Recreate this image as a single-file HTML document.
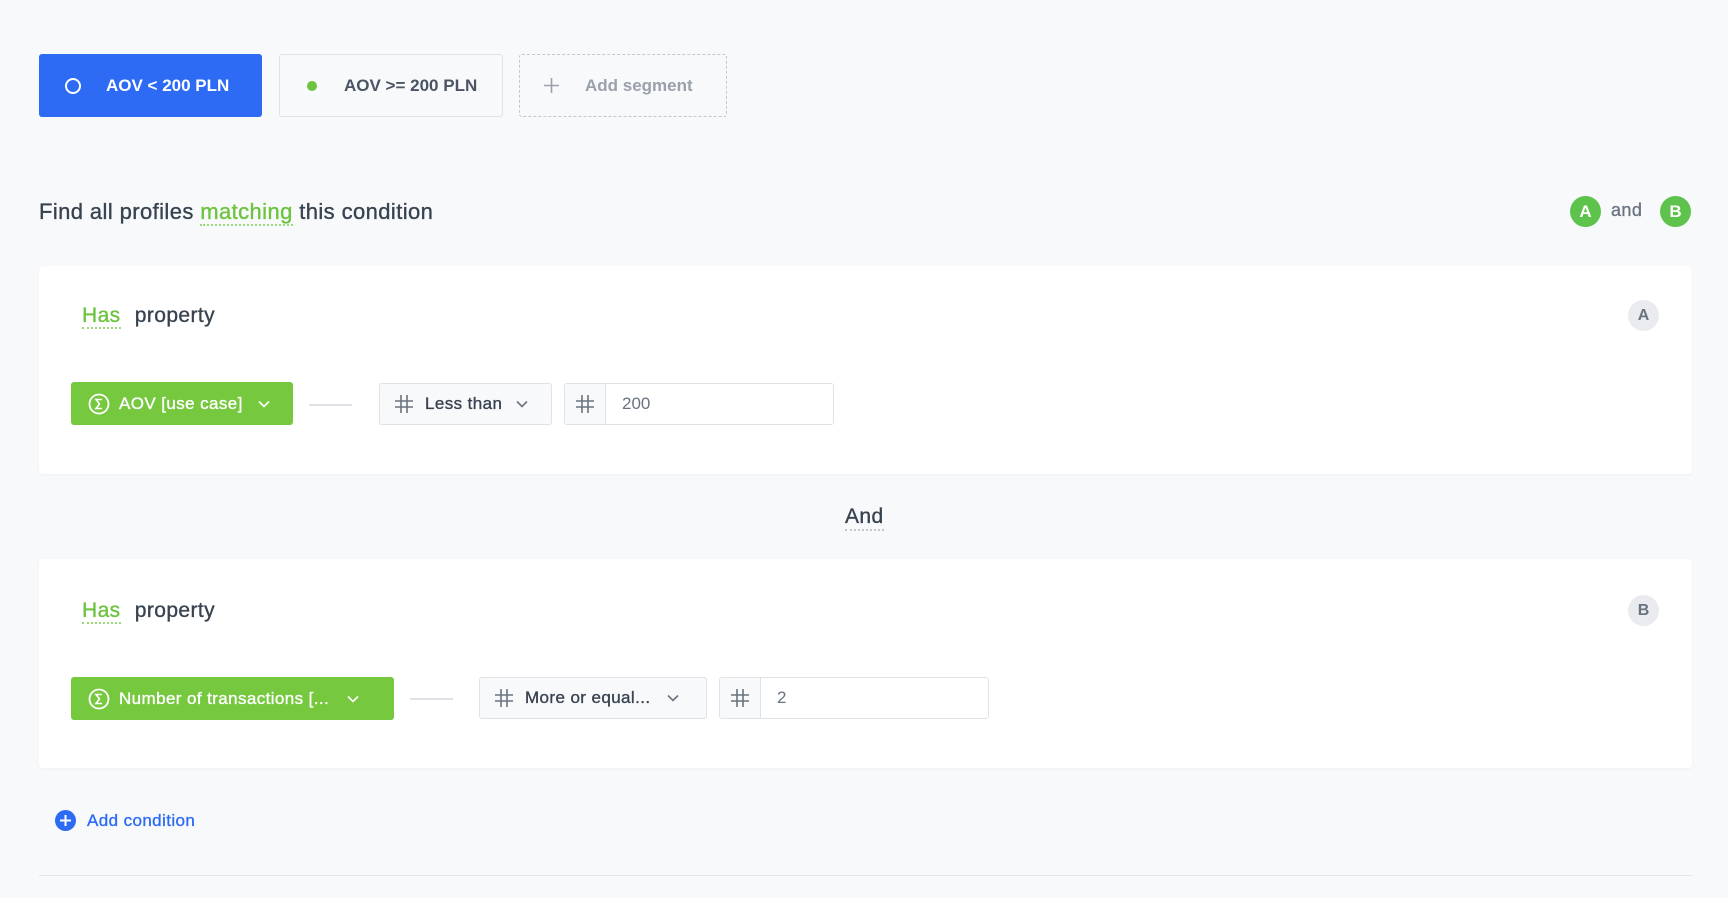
<!DOCTYPE html>
<html><head><meta charset="utf-8"><style>
*{box-sizing:border-box;margin:0;padding:0}
body{width:1728px;height:898px;background:#f8f9fb;font-family:"Liberation Sans",sans-serif;position:relative;overflow:hidden;color:#384350}
.abs{position:absolute}
.med{-webkit-text-stroke:0.35px currentColor;letter-spacing:0.4px}
.seg{position:absolute;top:54px;height:63px;border-radius:3px;display:flex;align-items:center;font-size:17px;font-weight:bold}
.card{position:absolute;left:39px;width:1653px;background:#fff;border-radius:4px;box-shadow:0 1px 3px rgba(0,0,0,.04)}
.has{position:absolute;left:43px;font-size:21px;color:#384350}
.has span{color:#6cc33d;border-bottom:2px dotted #9bd97a;margin-right:8px}
.badge{position:absolute;left:1589px;width:31px;height:31px;border-radius:50%;background:#e9ebee;color:#6a7380;font-size:16px;font-weight:bold;display:flex;align-items:center;justify-content:center}
.gbtn{position:absolute;height:43px;background:#76c83f;border-radius:3px;color:#fff;font-size:17px;display:flex;align-items:center;padding-left:17px}
.line{position:absolute;height:2px;background:#dfe2e6}
.sel{position:absolute;height:42px;background:#f8f9fb;border:1px solid #dfe2e6;border-radius:3px;display:flex;align-items:center;font-size:17px;color:#384350;padding-left:14px}
.inp{position:absolute;height:42px;background:#fff;border:1px solid #dfe2e6;border-radius:3px;display:flex;align-items:center;font-size:17px;color:#6a7380}
.inp .pre{width:41px;height:100%;background:#f8f9fb;border-right:1px solid #dfe2e6;display:flex;align-items:center;justify-content:center}
svg{display:block}
</style></head><body>
<div class="seg" style="left:39px;width:223px;background:#2d6bf5;color:#fff">
<span style="width:16px;height:16px;border:2px solid #fff;border-radius:50%;margin-left:26px"></span><span style="margin-left:25px">AOV &lt; 200 PLN</span></div>
<div class="seg" style="left:279px;width:224px;background:#f8f9fb;border:1px solid #dfe2e6;color:#4a5462">
<span style="width:10px;height:10px;background:#6cc33d;border-radius:50%;margin-left:27px"></span><span style="margin-left:27px">AOV &gt;= 200 PLN</span></div>
<div class="seg" style="left:519px;width:208px;border:1px dashed #c3c8ce;color:#9aa1ab">
<svg style="margin-left:23px" width="17" height="17" viewBox="0 0 17 17"><path d="M8.5 1v15M1 8.5h15" stroke="#9aa1ab" stroke-width="1.6"/></svg><span style="margin-left:25px;font-size:17px">Add segment</span></div>

<div class="abs med" style="left:39px;top:199px;font-size:22px;color:#384350">Find all profiles <span style="color:#6cc33d;border-bottom:2px dotted #9bd97a">matching</span> this condition</div>
<div class="abs" style="left:1570px;top:196px;width:31px;height:31px;border-radius:50%;background:#5ec34c;color:#fff;font-weight:bold;font-size:17px;display:flex;align-items:center;justify-content:center">A</div>
<div class="abs med" style="left:1611px;top:200px;font-size:18px;color:#6a7380">and</div>
<div class="abs" style="left:1660px;top:196px;width:31px;height:31px;border-radius:50%;background:#5ec34c;color:#fff;font-weight:bold;font-size:17px;display:flex;align-items:center;justify-content:center">B</div>

<div class="card" style="top:266px;height:208px">
<div class="has med" style="top:38px"><span>Has</span> property</div>
<div class="badge" style="top:34px">A</div>
</div>
<div class="gbtn med" style="left:71px;top:382px;width:222px">
<svg width="22" height="22" viewBox="0 0 22 22"><circle cx="11" cy="11" r="9.5" fill="none" stroke="#fff" stroke-width="1.8"/><path d="M14 6.5H8l3.5 4.5L8 15.5h6" fill="none" stroke="#fff" stroke-width="1.6"/></svg>
<span style="margin-left:9px">AOV [use case]</span><svg style="margin-left:15px" width="12" height="8" viewBox="0 0 12 8"><path d="M1 1.5l5 5 5-5" fill="none" stroke="#fff" stroke-width="1.6"/></svg></div>
<div class="line" style="left:309px;top:404px;width:43px"></div>
<div class="sel med" style="left:379px;top:383px;width:173px"><svg width="20" height="20" viewBox="0 0 20 20"><path d="M7 1v18M13 1v18M1 7h18M1 13h18" stroke="#6a7380" stroke-width="1.6"/></svg><span style="margin-left:11px">Less than</span><svg style="margin-left:14px" width="12" height="8" viewBox="0 0 12 8"><path d="M1 1.5l5 5 5-5" fill="none" stroke="#6a7380" stroke-width="1.6"/></svg></div>
<div class="inp" style="left:564px;top:383px;width:270px"><div class="pre"><svg width="20" height="20" viewBox="0 0 20 20"><path d="M7 1v18M13 1v18M1 7h18M1 13h18" stroke="#6a7380" stroke-width="1.6"/></svg></div><span style="margin-left:16px">200</span></div>

<div class="abs med" style="left:845px;top:505px;font-size:21px;color:#384350;border-bottom:2px dotted #c3c8ce">And</div>

<div class="card" style="top:559px;height:209px">
<div class="has med" style="top:40px"><span>Has</span> property</div>
<div class="badge" style="top:36px">B</div>
</div>
<div class="gbtn med" style="left:71px;top:677px;width:323px">
<svg width="22" height="22" viewBox="0 0 22 22"><circle cx="11" cy="11" r="9.5" fill="none" stroke="#fff" stroke-width="1.8"/><path d="M14 6.5H8l3.5 4.5L8 15.5h6" fill="none" stroke="#fff" stroke-width="1.6"/></svg>
<span style="margin-left:9px">Number of transactions [...</span><svg style="margin-left:18px" width="12" height="8" viewBox="0 0 12 8"><path d="M1 1.5l5 5 5-5" fill="none" stroke="#fff" stroke-width="1.6"/></svg></div>
<div class="line" style="left:410px;top:698px;width:43px"></div>
<div class="sel med" style="left:479px;top:677px;width:228px"><svg width="20" height="20" viewBox="0 0 20 20"><path d="M7 1v18M13 1v18M1 7h18M1 13h18" stroke="#6a7380" stroke-width="1.6"/></svg><span style="margin-left:11px">More or equal...</span><svg style="margin-left:17px" width="12" height="8" viewBox="0 0 12 8"><path d="M1 1.5l5 5 5-5" fill="none" stroke="#6a7380" stroke-width="1.6"/></svg></div>
<div class="inp" style="left:719px;top:677px;width:270px"><div class="pre"><svg width="20" height="20" viewBox="0 0 20 20"><path d="M7 1v18M13 1v18M1 7h18M1 13h18" stroke="#6a7380" stroke-width="1.6"/></svg></div><span style="margin-left:16px">2</span></div>

<div class="abs" style="left:55px;top:810px;width:21px;height:21px;border-radius:50%;background:#2d6bf5;display:flex;align-items:center;justify-content:center"><svg width="11" height="11" viewBox="0 0 11 11"><path d="M5.5 0v11M0 5.5h11" stroke="#fff" stroke-width="2"/></svg></div>
<div class="abs med" style="left:87px;top:811px;font-size:17px;color:#2d6bf5">Add condition</div>
<div class="abs" style="left:39px;top:875px;width:1653px;height:1px;background:#e3e6ea"></div>
</body></html>
